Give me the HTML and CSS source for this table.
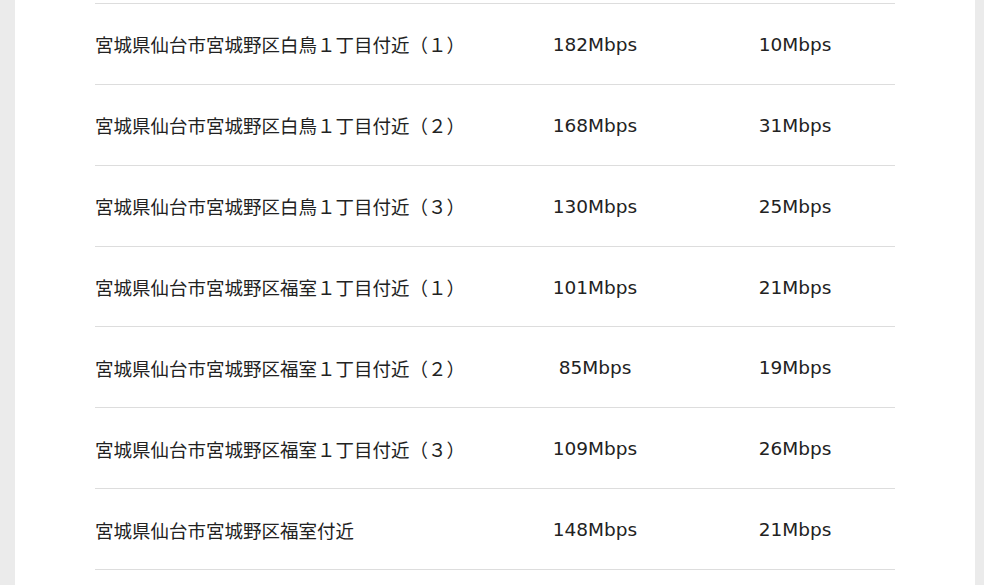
FILE: index.html
```html
<!DOCTYPE html>
<html lang="ja">
<head>
<meta charset="utf-8">
<title>速度</title>
<link rel="stylesheet" href="styles.css">
</head>
<body>
<div class="page">
  <div class="sheet">
    <div class="table">
      <div class="row"><div class="loc">宮城県仙台市宮城野区白鳥１丁目付近（１）</div><div class="num">182Mbps</div><div class="num">10Mbps</div></div>
      <div class="row"><div class="loc">宮城県仙台市宮城野区白鳥１丁目付近（２）</div><div class="num">168Mbps</div><div class="num">31Mbps</div></div>
      <div class="row"><div class="loc">宮城県仙台市宮城野区白鳥１丁目付近（３）</div><div class="num">130Mbps</div><div class="num">25Mbps</div></div>
      <div class="row"><div class="loc">宮城県仙台市宮城野区福室１丁目付近（１）</div><div class="num">101Mbps</div><div class="num">21Mbps</div></div>
      <div class="row"><div class="loc">宮城県仙台市宮城野区福室１丁目付近（２）</div><div class="num">85Mbps</div><div class="num">19Mbps</div></div>
      <div class="row"><div class="loc">宮城県仙台市宮城野区福室１丁目付近（３）</div><div class="num">109Mbps</div><div class="num">26Mbps</div></div>
      <div class="row last"><div class="loc">宮城県仙台市宮城野区福室付近</div><div class="num">148Mbps</div><div class="num">21Mbps</div></div>
    </div>
  </div>
</div>
</body>
</html>
```

FILE: styles.css
```css
html, body {
  margin: 0;
  padding: 0;
  background: #ebebeb;
  height: 100%;
  overflow: hidden;
}
.page {
  display: flex;
  padding: 0 9px 0 15px;
  height: 585px;
}
.sheet {
  flex: 1;
  background: #ffffff;
  padding: 3px 80px 0 80px;
}
.table {
  display: flex;
  flex-direction: column;
  font-family: Verdana, "DejaVu Sans", "Noto Sans CJK JP", sans-serif;
  font-size: 18.5px;
  color: #222222;
}
.row {
  display: grid;
  grid-template-columns: 400px 200px 200px;
  align-items: center;
  height: 80.86px;
  box-sizing: border-box;
  border-top: 1px solid #dddddd;
  padding-top: 1px;
}
.row.last {
  border-bottom: 1px solid #dddddd;
  height: 81.86px;
}
.loc {
  text-align: left;
  white-space: nowrap;
}
.num {
  text-align: center;
}
```
